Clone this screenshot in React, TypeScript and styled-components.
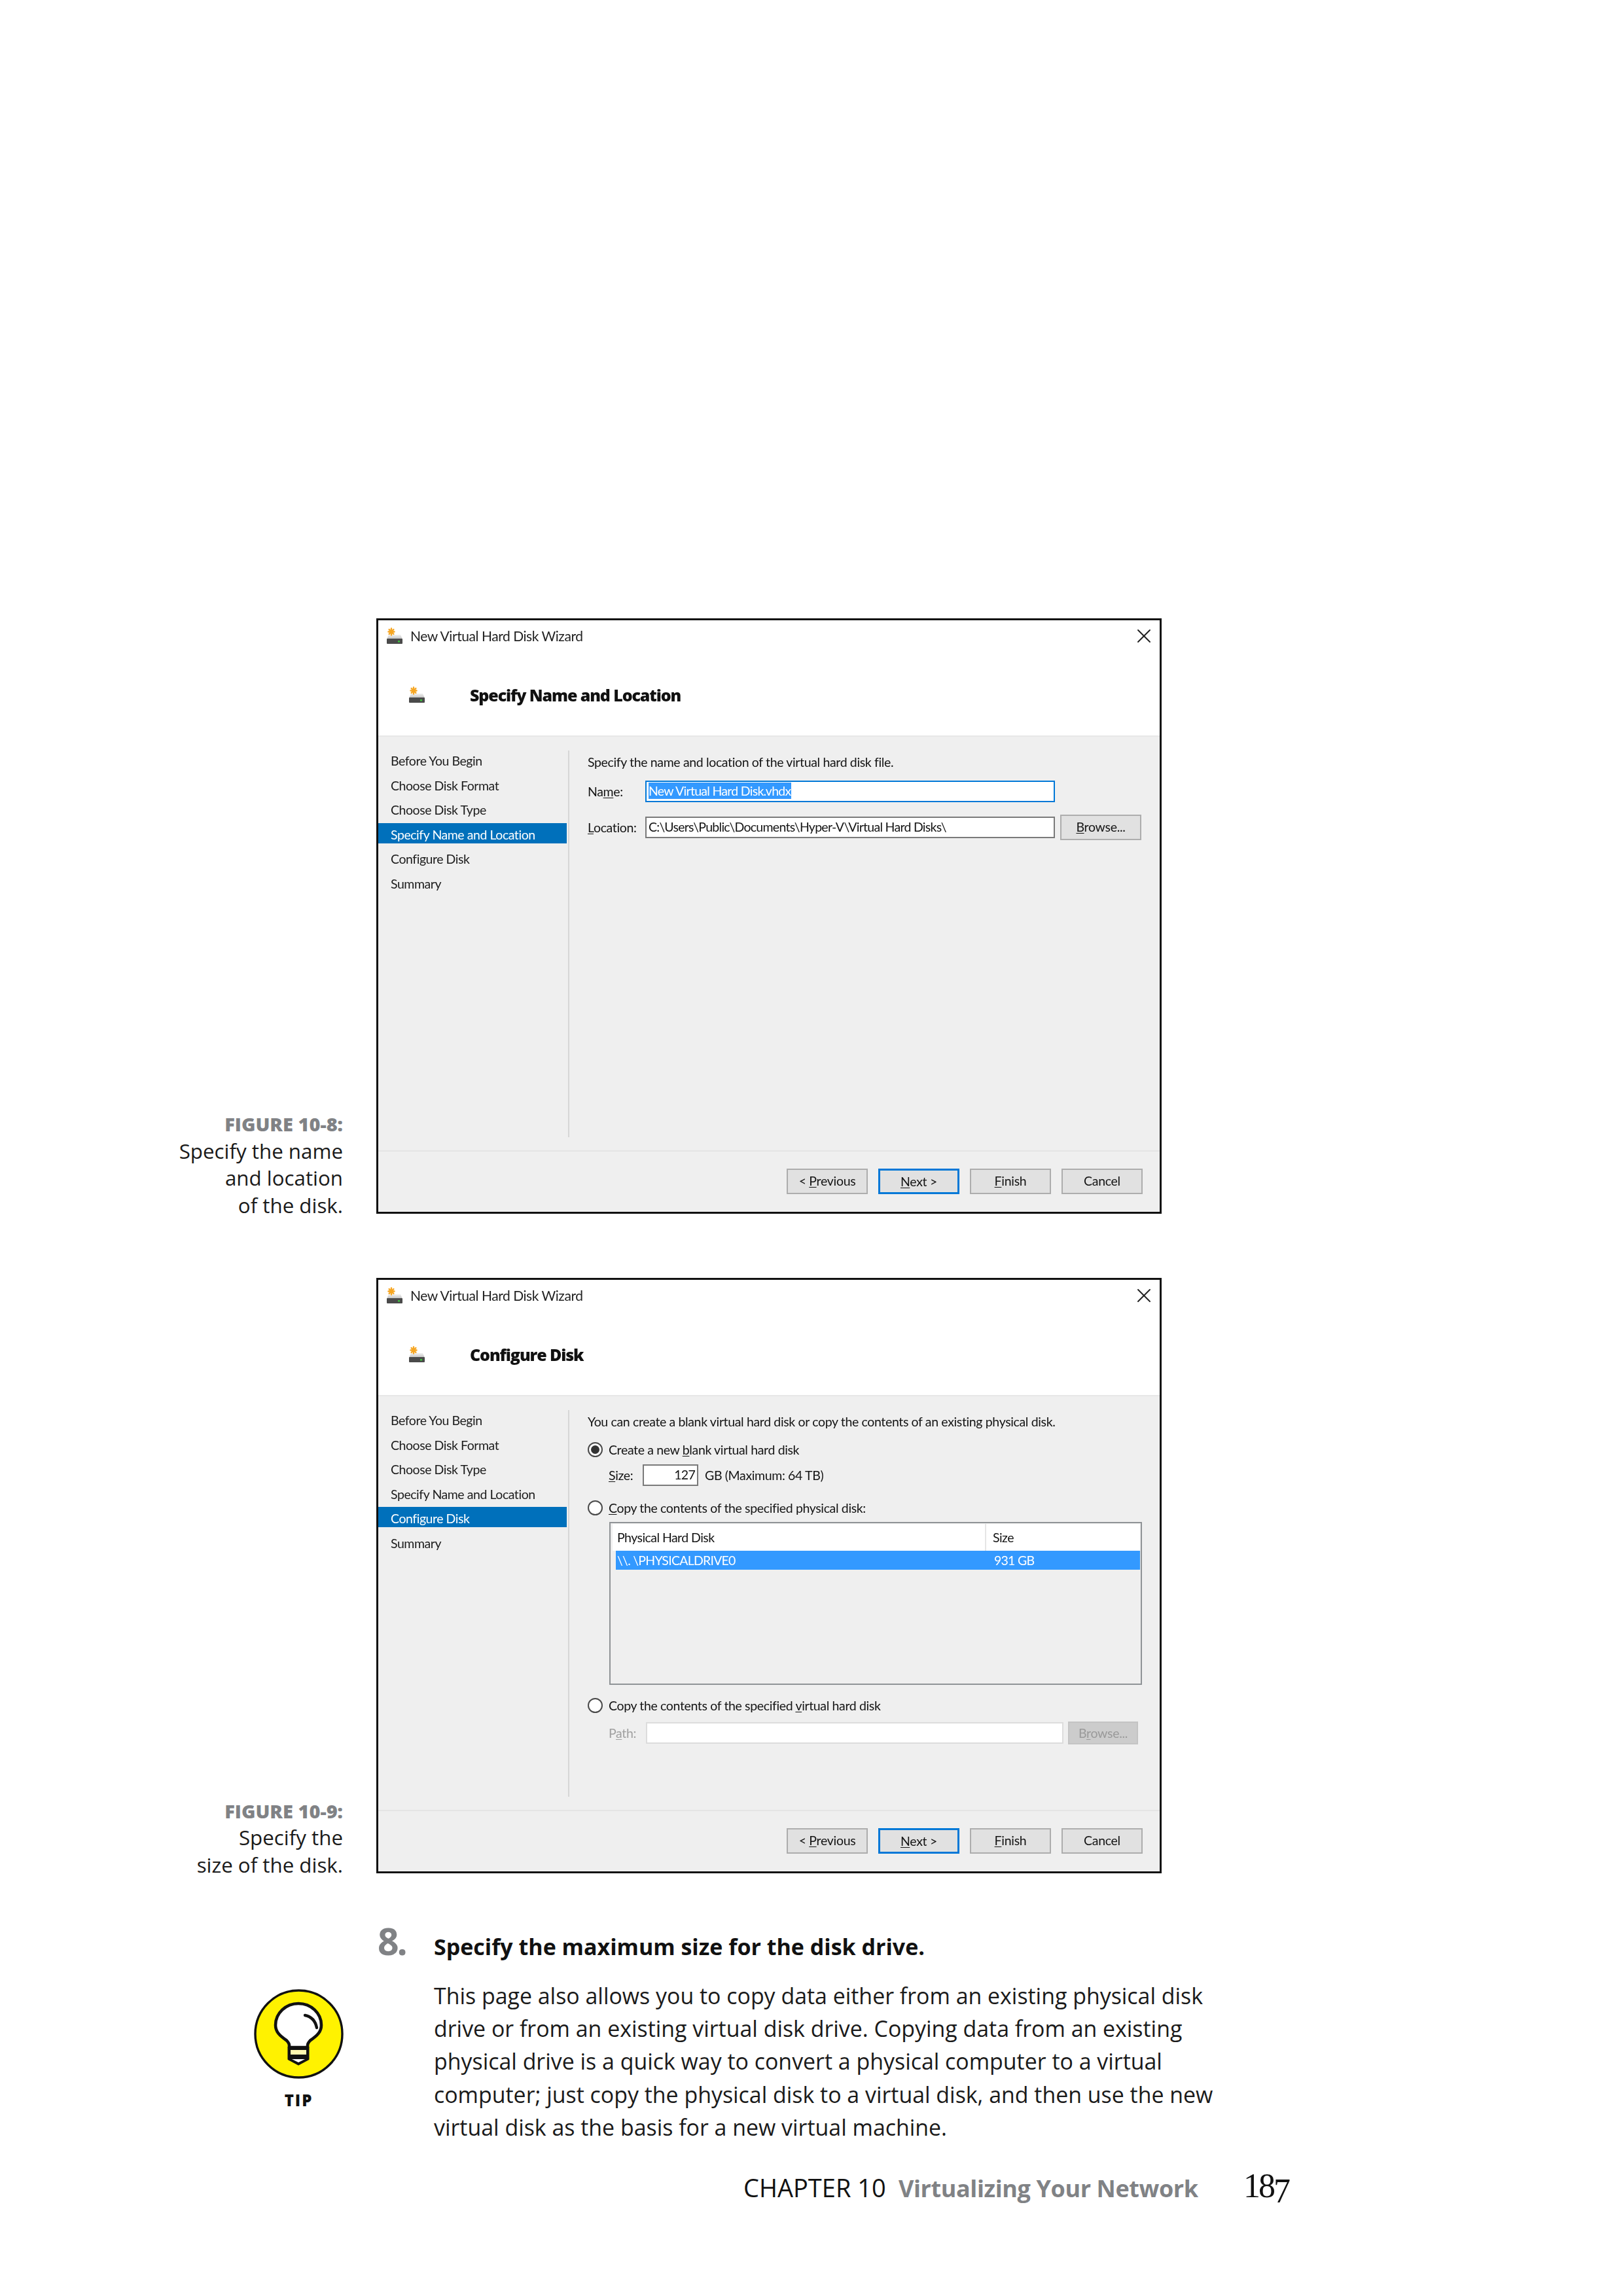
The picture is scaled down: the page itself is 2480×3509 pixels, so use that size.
import React from "react";
import styled, { createGlobalStyle } from "styled-components";
import { X } from "lucide-react";

const GlobalStyle = createGlobalStyle`
  * { box-sizing: border-box; }
  html, body { margin: 0; padding: 0; background: #fff; }
  body { font-family: "Open Sans", "Noto Sans", sans-serif; color: #111; }
`;

const Page = styled.div`
  width: 2480px;
  height: 3509px;
  padding-top: 945px;
  overflow: hidden;
  background: #fff;
`;

const FigureRow = styled.section<{ $gapTop?: number }>`
  display: flex;
  align-items: flex-end;
  gap: 51px;
  margin-top: ${(p) => p.$gapTop ?? 0}px;
`;

const Caption = styled.div`
  width: 524px;
  margin-bottom: -8px;
  text-align: right;
  font-size: 31.3px;
  line-height: 41.5px;
  color: #1a1a1a;
`;

const CaptionLabel = styled.div`
  font-size: 29px;
  font-weight: 800;
  color: #808285;
`;

/* wizard window */
const Window = styled.div`
  display: flex;
  flex-direction: column;
  width: 1200px;
  height: 910px;
  border: 3px solid #111;
  background: #fff;
  font-family: Lato, "Open Sans", sans-serif;
  font-size: 19.5px;
  letter-spacing: -0.45px;
  color: #141414;
  filter: blur(0.45px);
`;

const TitleBar = styled.div`
  display: flex;
  align-items: center;
  height: 47px;
  padding: 0 6px 0 12px;
  gap: 11px;
`;

const TitleText = styled.span`
  flex: 1;
  font-size: 21px;
  color: #222;
`;

const Header = styled.div`
  display: flex;
  align-items: center;
  height: 131px;
  padding: 4px 0 0 46px;
  border-bottom: 2px solid #e7e7e7;
`;

const Heading = styled.h2`
  margin: 0 0 0 68px;
  font-family: "Open Sans", sans-serif;
  font-size: 25px;
  font-weight: 800;
  letter-spacing: -1.1px;
  color: #111;
`;

const Body = styled.div`
  flex: 1;
  display: flex;
  padding: 19px 0 20px;
  background: #efefef;
`;

const Sidebar = styled.ul`
  display: flex;
  flex-direction: column;
  gap: 6.6px;
  width: 288px;
  margin: 0;
  padding: 0;
  list-style: none;
`;

const Step = styled.li<{ $active?: boolean }>`
  height: 31px;
  padding: 2px 0 0 19px;
  line-height: 31px;
  background: ${(p) => (p.$active ? "#0070bb" : "transparent")};
  color: ${(p) => (p.$active ? "#fff" : "#1c1c1c")};
`;

const SideRule = styled.div`
  width: 2px;
  margin: 2px 0 0 2px;
  background: #d6d6d6;
`;

const Content = styled.div`
  flex: 1;
  display: flex;
  flex-direction: column;
  padding: 5px 0 0 28px;
  letter-spacing: -0.36px;
`;

const Intro = styled.div`
  height: 30px;
  line-height: 30px;
`;

const FieldRow = styled.div<{ $top: number; $indent?: number }>`
  display: flex;
  align-items: center;
  margin-top: ${(p) => p.$top}px;
  margin-left: ${(p) => p.$indent ?? 0}px;
`;

const FieldLabel = styled.span<{ $width: number; $muted?: boolean }>`
  width: ${(p) => p.$width}px;
  color: ${(p) => (p.$muted ? "#a0a0a0" : "inherit")};
`;

const Field = styled.div<{ $width: number; $tone?: "focus" | "normal" | "off"; $right?: boolean }>`
  width: ${(p) => p.$width}px;
  height: 33px;
  padding: 0 3px;
  line-height: 28px;
  letter-spacing: -0.72px;
  white-space: nowrap;
  text-align: ${(p) => (p.$right ? "right" : "left")};
  background: #fff;
  border: 2px solid
    ${(p) => (p.$tone === "focus" ? "#0078d7" : p.$tone === "off" ? "#dcdcdc" : "#7a7a7a")};
`;

const Selected = styled.span`
  display: inline-block;
  height: 25px;
  line-height: 25px;
  background: #3399ff;
  color: #fff;
`;

const AfterField = styled.span`
  margin-left: 10px;
`;

const Button = styled.div<{ $width?: number; $focus?: boolean; $off?: boolean }>`
  width: ${(p) => p.$width ?? 124}px;
  height: ${(p) => (p.$off ? 35 : 39)}px;
  line-height: ${(p) => (p.$off ? 31 : 34)}px;
  letter-spacing: -0.3px;
  text-align: center;
  background: ${(p) => (p.$off ? "#cccccc" : "#e1e1e1")};
  border: ${(p) =>
    p.$focus ? "3px solid #0078d7" : `2px solid ${p.$off ? "#c4c4c4" : "#adadad"}`};
  color: ${(p) => (p.$off ? "#9a9a9a" : "#141414")};
`;

const BrowseSlot = styled.div<{ $left: number }>`
  margin-left: ${(p) => p.$left}px;
`;

const RadioRow = styled.div<{ $top: number }>`
  display: flex;
  align-items: center;
  gap: 9px;
  height: 30px;
  margin-top: ${(p) => p.$top}px;
`;

const Radio = styled.span<{ $on?: boolean }>`
  position: relative;
  width: 23px;
  height: 23px;
  border: 2px solid #4a4a4a;
  border-radius: 50%;
  background: #fff;

  &::after {
    content: "";
    display: ${(p) => (p.$on ? "block" : "none")};
    position: absolute;
    inset: 3px;
    border-radius: 50%;
    background: #333;
  }
`;

const DiskTable = styled.div`
  width: 814px;
  height: 249px;
  margin: 7px 0 0 33px;
  padding: 1px 1px 0 3px;
  border: 2px solid #8f9396;
`;

const TableHead = styled.div`
  display: flex;
  height: 41px;
  line-height: 41px;
  letter-spacing: -0.55px;
  background: #fff;
`;

const HeadCell = styled.div<{ $width?: number }>`
  width: ${(p) => (p.$width ? `${p.$width}px` : "auto")};
  flex: ${(p) => (p.$width ? "none" : 1)};
  padding-left: ${(p) => (p.$width ? 7 : 10)}px;
  border-left: ${(p) => (p.$width ? "none" : "2px solid #e6e6e6")};
`;

const TableRow = styled.div`
  display: flex;
  height: 29px;
  margin-left: 5px;
  line-height: 29px;
  letter-spacing: -0.75px;
  background: #3399ff;
  color: #fff;
`;

const RowCell = styled.div<{ $width?: number }>`
  width: ${(p) => (p.$width ? `${p.$width}px` : "auto")};
  padding-left: ${(p) => (p.$width ? 2 : 12)}px;
`;

const WindowFooter = styled.div`
  display: flex;
  justify-content: flex-end;
  gap: 16px;
  height: 94px;
  padding: 26px 26px 0 0;
  background: #efefef;
  border-top: 2px solid #e4e4e4;
`;

const Key = styled.span`
  text-decoration: underline;
  text-underline-offset: 2px;
`;

/* text below the figures */
const StepRow = styled.section`
  display: flex;
  margin-top: 87px;
`;

const Gutter = styled.aside`
  width: 577px;
  padding: 90px 0 0 388px;
`;

const TipBadge = styled.div`
  width: 137px;
  text-align: center;
`;

const TipLabel = styled.div`
  margin-top: 18px;
  font-size: 24px;
  line-height: 30px;
  font-weight: 800;
  letter-spacing: 2px;
  color: #111;
`;

const StepNumber = styled.div`
  width: 86px;
  margin-top: -14px;
  font-size: 57px;
  line-height: 60px;
  font-weight: 700;
  letter-spacing: -3px;
  color: #808285;
`;

const StepBody = styled.div`
  width: 1260px;
`;

const StepTitle = styled.h3`
  margin: 0;
  font-size: 34px;
  line-height: 50px;
  font-weight: 700;
  color: #111;
`;

const StepText = styled.p`
  margin: 24.6px 0 0;
  font-size: 33.9px;
  line-height: 50.4px;
  color: #1a1a1a;
`;

const PageFooter = styled.footer`
  display: flex;
  align-items: baseline;
  margin-top: 39px;
  padding-left: 1136px;
  font-size: 38px;
  line-height: 50px;
  color: #111;
`;

const Chapter = styled.span`
  width: 237px;
`;

const ChapterName = styled.span`
  width: 527px;
  font-size: 36px;
  font-weight: 700;
  letter-spacing: -0.4px;
  color: #808285;
`;

const Folio = styled.span`
  font-family: "Liberation Serif", serif;
  font-size: 52px;
  letter-spacing: -3px;
`;

const FolioSeven = styled.span`
  position: relative;
  top: 8px;
`;

const DiskSvg = styled.svg`
  flex: none;
`;

const TipSvg = styled.svg`
  display: block;
`;

const DiskIcon = () => (
  <DiskSvg width="26" height="26" viewBox="0 0 26 26">
    <defs>
      <linearGradient id="disk-top" x1="0" y1="0" x2="0" y2="1">
        <stop offset="0" stopColor="#f2f2f2" />
        <stop offset="1" stopColor="#bdbdbd" />
      </linearGradient>
    </defs>
    <path d="M4 11h18l3 7H1z" fill="url(#disk-top)" />
    <rect x="1" y="17" width="24" height="8" rx="1" fill="#4a4a4a" />
    <rect x="18" y="20" width="3" height="2.5" fill="#3fc23f" />
    <g stroke="#f6a623" strokeWidth="2.4" strokeLinecap="round">
      <path d="M8 1.5v10M3.5 6.5h9M4.6 3l6.8 7M11.4 3l-6.8 7" />
    </g>
  </DiskSvg>
);

const TipIcon = () => (
  <TipSvg width="137" height="137" viewBox="0 0 137 137">
    <circle cx="68.5" cy="68.5" r="66.5" fill="#fff200" stroke="#111" strokeWidth="3.4" />
    <path
      d="M54 89v-3c0-3-1.6-5-4-7.5C39 71 33 65 33 55a35 33 0 0 1 70 0c0 10-6 16-17 23.5-2.4 2.5-4 4.5-4 7.5v3z"
      fill="#fff"
      stroke="#111"
      strokeWidth="4.6"
      strokeLinejoin="round"
    />
    <path d="M78 40c10 2 16 9 18 19" fill="none" stroke="#111" strokeWidth="4.4" strokeLinecap="round" />
    <path d="M53 89h30v18l-15 8-15-8z" fill="#111" stroke="#111" strokeWidth="3" strokeLinejoin="round" />
    <rect x="56" y="93" width="24" height="7" fill="#fff7b0" />
    <path d="M58 107h20l-10 5z" fill="#fff" />
  </TipSvg>
);

const steps = [
  "Before You Begin",
  "Choose Disk Format",
  "Choose Disk Type",
  "Specify Name and Location",
  "Configure Disk",
  "Summary",
];

interface WizardProps {
  title: string;
  active: string;
  children: React.ReactNode;
}

const Wizard: React.FC<WizardProps> = ({ title, active, children }) => (
  <Window>
    <TitleBar>
      <DiskIcon />
      <TitleText>New Virtual Hard Disk Wizard</TitleText>
      <X size={36} strokeWidth={1.3} color="#222" />
    </TitleBar>
    <Header>
      <DiskIcon />
      <Heading>{title}</Heading>
    </Header>
    <Body>
      <Sidebar>
        {steps.map((step) => (
          <Step key={step} $active={step === active}>
            {step}
          </Step>
        ))}
      </Sidebar>
      <SideRule />
      <Content>{children}</Content>
    </Body>
    <WindowFooter>
      <Button>
        &lt; <Key>P</Key>revious
      </Button>
      <Button $focus>
        <Key>N</Key>ext &gt;
      </Button>
      <Button>
        <Key>F</Key>inish
      </Button>
      <Button>Cancel</Button>
    </WindowFooter>
  </Window>
);

const App: React.FC = () => (
  <Page>
    <GlobalStyle />
    <FigureRow>
      <Caption>
        <CaptionLabel>FIGURE 10-8:</CaptionLabel>
        Specify the name
        <br />
        and location
        <br />
        of the disk.
      </Caption>
      <Wizard title="Specify Name and Location" active="Specify Name and Location">
        <Intro>Specify the name and location of the virtual hard disk file.</Intro>
        <FieldRow $top={13}>
          <FieldLabel $width={88}>
            Na<Key>m</Key>e:
          </FieldLabel>
          <Field $width={626} $tone="focus">
            <Selected>New Virtual Hard Disk.vhdx</Selected>
          </Field>
        </FieldRow>
        <FieldRow $top={19}>
          <FieldLabel $width={88}>
            <Key>L</Key>ocation:
          </FieldLabel>
          <Field $width={626}>C:\Users\Public\Documents\Hyper-V\Virtual Hard Disks\</Field>
          <BrowseSlot $left={8}>
            <Button $width={124}>
              <Key>B</Key>rowse...
            </Button>
          </BrowseSlot>
        </FieldRow>
      </Wizard>
    </FigureRow>

    <FigureRow $gapTop={98}>
      <Caption>
        <CaptionLabel>FIGURE 10-9:</CaptionLabel>
        Specify the
        <br />
        size of the disk.
      </Caption>
      <Wizard title="Configure Disk" active="Configure Disk">
        <Intro>You can create a blank virtual hard disk or copy the contents of an existing physical disk.</Intro>
        <RadioRow $top={12}>
          <Radio $on />
          <span>
            Create a new <Key>b</Key>lank virtual hard disk
          </span>
        </RadioRow>
        <FieldRow $top={8} $indent={32}>
          <FieldLabel $width={52}>
            <Key>S</Key>ize:
          </FieldLabel>
          <Field $width={85} $right>
            127
          </Field>
          <AfterField>GB (Maximum: 64 TB)</AfterField>
        </FieldRow>
        <RadioRow $top={18}>
          <Radio />
          <span>
            <Key>C</Key>opy the contents of the specified physical disk:
          </span>
        </RadioRow>
        <DiskTable>
          <TableHead>
            <HeadCell $width={569}>Physical Hard Disk</HeadCell>
            <HeadCell>Size</HeadCell>
          </TableHead>
          <TableRow>
            <RowCell $width={566}>\\. \PHYSICALDRIVE0</RowCell>
            <RowCell>931 GB</RowCell>
          </TableRow>
        </DiskTable>
        <RadioRow $top={16}>
          <Radio />
          <span>
            Copy the contents of the specified <Key>v</Key>irtual hard disk
          </span>
        </RadioRow>
        <FieldRow $top={10} $indent={32}>
          <FieldLabel $width={57} $muted>
            P<Key>a</Key>th:
          </FieldLabel>
          <Field $width={638} $tone="off" />
          <BrowseSlot $left={7}>
            <Button $off $width={107}>
              B<Key>r</Key>owse...
            </Button>
          </BrowseSlot>
        </FieldRow>
      </Wizard>
    </FigureRow>

    <StepRow>
      <Gutter>
        <TipBadge>
          <TipIcon />
          <TipLabel>TIP</TipLabel>
        </TipBadge>
      </Gutter>
      <StepNumber>8.</StepNumber>
      <StepBody>
        <StepTitle>Specify the maximum size for the disk drive.</StepTitle>
        <StepText>
          This page also allows you to copy data either from an existing physical disk
          <br />
          drive or from an existing virtual disk drive. Copying data from an existing
          <br />
          physical drive is a quick way to convert a physical computer to a virtual
          <br />
          computer; just copy the physical disk to a virtual disk, and then use the new
          <br />
          virtual disk as the basis for a new virtual machine.
        </StepText>
      </StepBody>
    </StepRow>

    <PageFooter>
      <Chapter>CHAPTER 10</Chapter>
      <ChapterName>Virtualizing Your Network</ChapterName>
      <Folio>
        18<FolioSeven>7</FolioSeven>
      </Folio>
    </PageFooter>
  </Page>
);

export default App;
